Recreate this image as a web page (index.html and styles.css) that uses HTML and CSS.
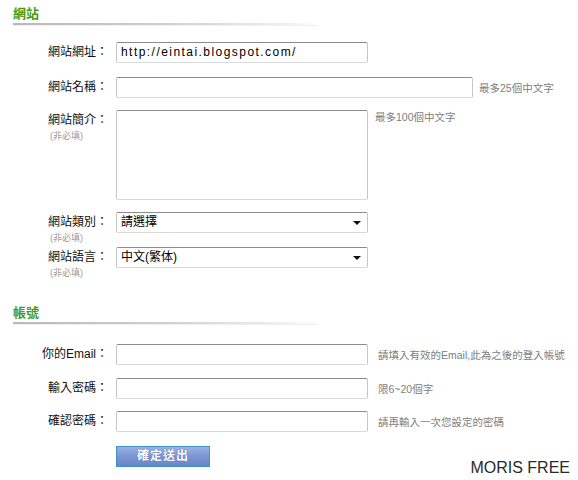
FILE: index.html
```html
<!DOCTYPE html>
<html lang="zh-Hant">
<head>
<meta charset="utf-8">
<title>網站</title>
<link rel="stylesheet" href="styles.css">
</head>
<body>
<div class="page">
  <h2 class="sec-title">網站</h2>
  <div class="sec-line"></div>

  <div class="row r1">
    <div class="lab"><div class="lab-main">網站網址：</div></div>
    <div class="field"><div class="inp w252 url">http://eintai.blogspot.com/</div></div>
  </div>

  <div class="row r2">
    <div class="lab"><div class="lab-main">網站名稱：</div></div>
    <div class="field"><div class="inp w357"></div><span class="hint">最多25個中文字</span></div>
  </div>

  <div class="row r3">
    <div class="lab"><div class="lab-main">網站簡介：</div><div class="note">(非必填)</div></div>
    <div class="field top"><div class="inp w252 area"></div><span class="hint hint-top">最多100個中文字</span></div>
  </div>

  <div class="row r4">
    <div class="lab"><div class="lab-main">網站類別：</div><div class="note">(非必填)</div></div>
    <div class="field top"><div class="inp w252 sel">請選擇</div></div>
  </div>

  <div class="row r5">
    <div class="lab"><div class="lab-main">網站語言：</div><div class="note">(非必填)</div></div>
    <div class="field top"><div class="inp w252 sel">中文(繁体)</div></div>
  </div>

  <h2 class="sec-title sec2">帳號</h2>
  <div class="sec-line"></div>

  <div class="row r6">
    <div class="lab"><div class="lab-main">你的Email：</div></div>
    <div class="field"><div class="inp w252"></div><span class="hint hint-l">請填入有效的Email,此為之後的登入帳號</span></div>
  </div>

  <div class="row r7">
    <div class="lab"><div class="lab-main">輸入密碼：</div></div>
    <div class="field"><div class="inp w252"></div><span class="hint hint-l">限6~20個字</span></div>
  </div>

  <div class="row r8">
    <div class="lab"><div class="lab-main">確認密碼：</div></div>
    <div class="field"><div class="inp w252"></div><span class="hint hint-l">請再輸入一次您設定的密碼</span></div>
  </div>

  <div class="foot">
    <button class="btn" type="button">確定送出</button>
    <span class="brand">MORIS FREE</span>
  </div>
</div>
</body>
</html>
```
FILE: styles.css
```css
html, body {
  margin: 0;
  padding: 0;
  background: #ffffff;
}
body {
  font-family: "Liberation Sans", "Noto Sans CJK TC", sans-serif;
  color: #111;
  font-size: 12px;
}
.page {
  width: 578px;
  height: 480px;
  box-sizing: border-box;
  padding: 6px 8px 0 13px;
  overflow: hidden;
}
.sec-title {
  margin: 0;
  font-size: 13px;
  line-height: 16px;
  height: 16px;
  font-weight: bold;
  color: #459b14;
}
.sec2 {
  margin-top: 27px;
}
.sec-line {
  margin-top: 1px;
  width: 305px;
  height: 1px;
  background: linear-gradient(to right, #b8b8b8 0%, #cfcfcf 50%, #f0f0f0 90%, #ffffff 100%);
  border-bottom: 1px solid transparent;
  box-shadow: 0 1px 0 #f0f0f0;
}
.row {
  display: flex;
  align-items: flex-start;
}
.r1 { margin-top: 17px; }
.r2 { margin-top: 14px; }
.r3 { margin-top: 12px; }
.r4 { margin-top: 12px; }
.r5 { margin-top: 4px; }
.r6 { margin-top: 20px; }
.r7 { margin-top: 13px; }
.r8 { margin-top: 12px; }

.lab {
  width: 103px;
  flex: none;
}
.lab-main {
  text-align: right;
  padding-right: 8px;
  line-height: 21px;
  height: 21px;
  font-size: 12px;
  color: #111;
  white-space: nowrap;
}
.note {
  padding-left: 37px;
  font-size: 9px;
  line-height: 10px;
  color: #999;
  white-space: nowrap;
}
.field {
  display: flex;
  align-items: center;
}
.field.top {
  align-items: flex-start;
}
.inp {
  box-sizing: border-box;
  height: 21px;
  border: 1px solid;
  border-color: #8c8c8c #c6c6c6 #dadada #c6c6c6;
  border-radius: 2px;
  background: #fff;
  padding: 0 4px;
  line-height: 19px;
  font-size: 12px;
  color: #000;
  position: relative;
  white-space: nowrap;
}
.w252 { width: 252px; }
.w357 { width: 357px; }
.url {
  letter-spacing: 1.45px;
}
.area {
  height: 90px;
}
.sel::after {
  content: "";
  position: absolute;
  right: 6px;
  top: 8px;
  border-left: 4px solid transparent;
  border-right: 4px solid transparent;
  border-top: 4px solid #111;
}
.hint {
  font-size: 10.5px;
  line-height: 12px;
  color: #808080;
  margin-left: 6px;
  white-space: nowrap;
}
.hint-top {
  margin-left: 7px;
  margin-top: 1px;
}
.hint-l {
  margin-left: 10px;
}
.foot {
  display: flex;
  justify-content: space-between;
  align-items: flex-start;
  padding-left: 103px;
  margin-top: 14px;
}
.btn {
  width: 94px;
  height: 21px;
  box-sizing: border-box;
  border: 1px solid #3a93c2;
  border-right-color: #2f9fc5;
  background: linear-gradient(to bottom, #9ab2e2 0%, #7b97d3 50%, #6885c7 100%);
  color: #fff;
  font-family: "Liberation Sans", "Noto Sans CJK TC", sans-serif;
  font-size: 12px;
  font-weight: bold;
  letter-spacing: 1px;
  line-height: 19px;
  padding: 0;
  text-shadow: 0 0 1px #3d5a9a;
}
.brand {
  margin-top: 13px;
  font-size: 16px;
  line-height: 18px;
  color: #2a2a2a;
  font-family: "Liberation Sans", sans-serif;
}
```
